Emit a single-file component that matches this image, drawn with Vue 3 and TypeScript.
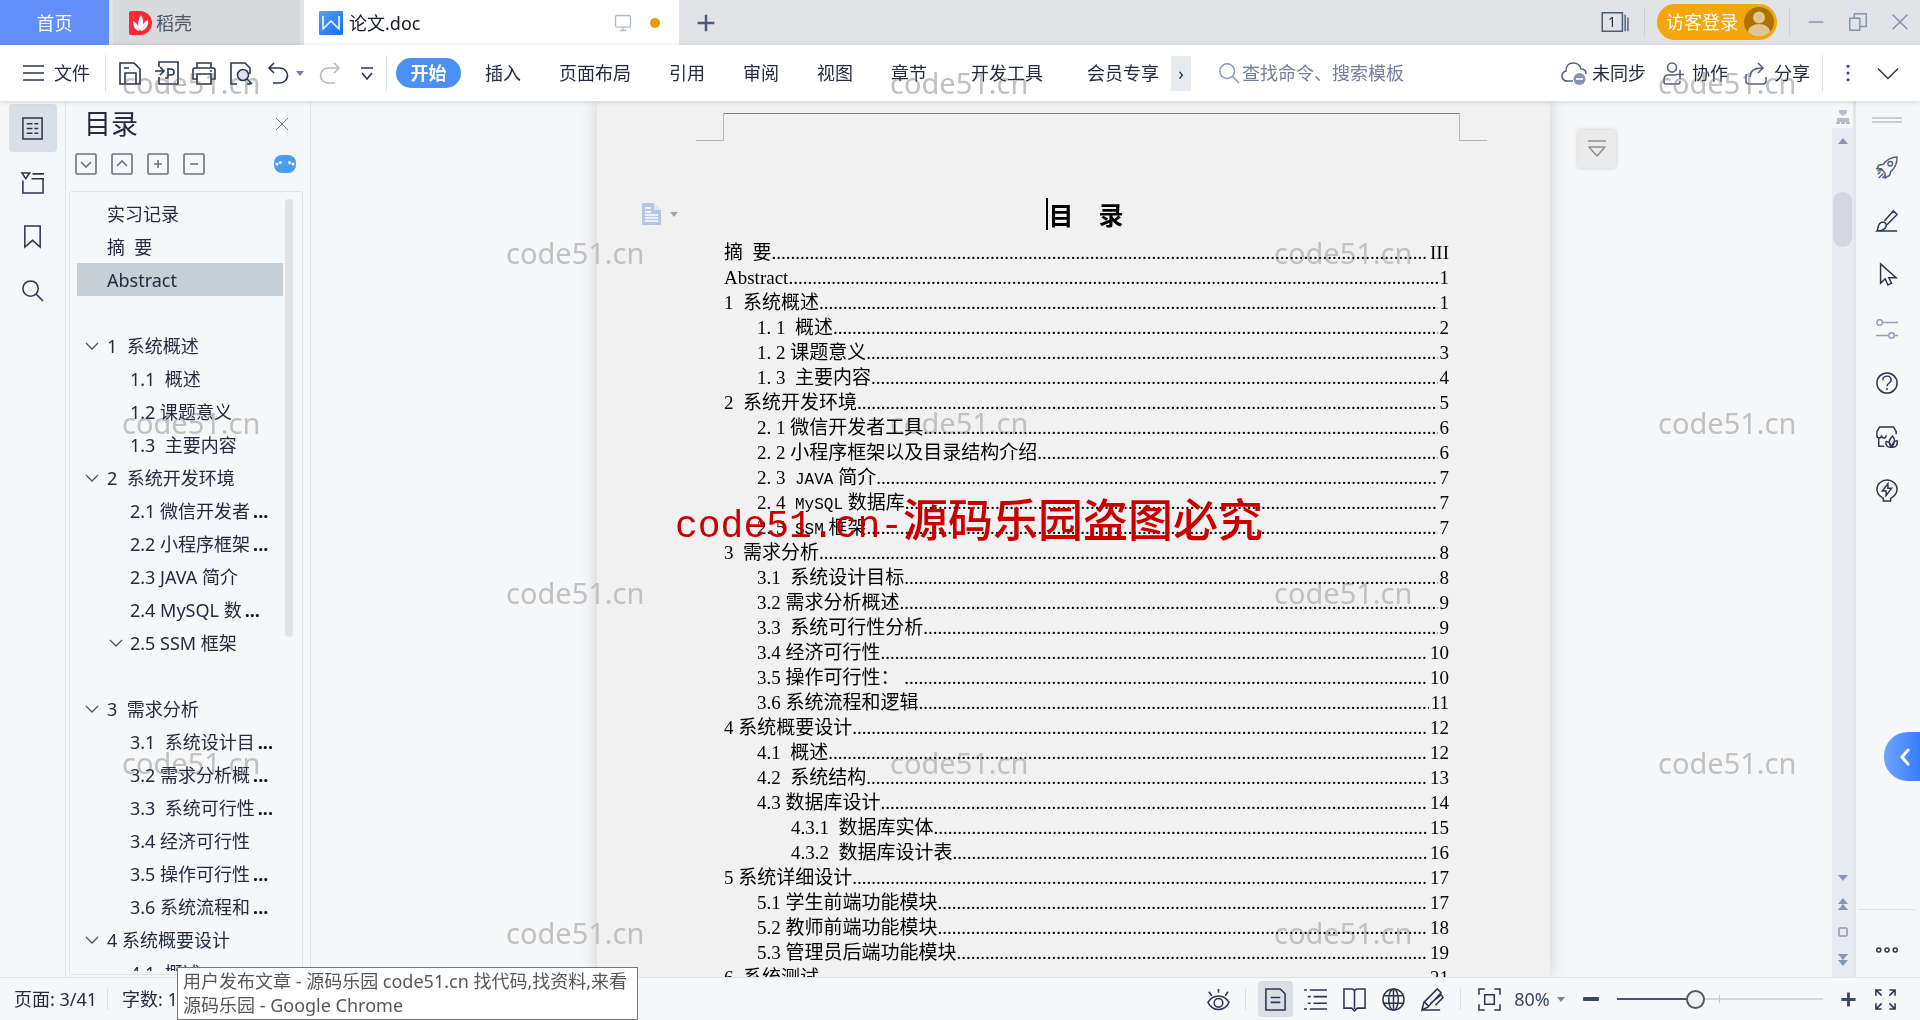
<script setup lang="ts">
import { ref } from 'vue'

const icons: Record<string, string> = {
  menu: '<path d="M1 5h21M1 12h21M1 19h21"/>',
  save: '<path d="M2 2h14l6 6v15H2zM7 23V12h11v11M6 7h5"/>',
  exportPdf: '<path d="M4 6V1h19v22H4v-7M0 10h9M5 6l4 4-4 4M13 7v10M10 17h3M13 8h3q3 0 3 3t-3 3h-3"/>',
  print: '<path d="M5 7V2h14v5M5 18H1V9q0-2 2-2h18q2 0 2 2v9h-4M5 13h14v10H5zM18 10h2"/>',
  preview: '<path d="M8 23H2V2h14l5 5v6M21 21v2h-3"/><circle cx="14" cy="14" r="5.5" fill="#dfe2e8"/><path d="M18 18l5 5"/>',
  undo: '<path d="M8 2L3 7l5 5M3 7h11a7.500 7.500 0 0 1 0 15H7"/>',
  redo: '<path d="M16 2l5 5-5 5M21 7H10a7.500 7.500 0 0 0 0 15h7"/>',
  more: '<path d="M6 7h12M7 12l5 6 5-6"/>',
  search: '<circle cx="10" cy="10" r="8"/><path d="M16 16l7 7"/>',
  cloud: '<path d="M11 20H6A5 5 0 0 1 4 10C4 5 7 2 11 2c4 0 7 2 8 6 3 0 5 2 5 5"/><circle cx="17.500" cy="18" r="6" fill="#8794b0" stroke="none"/><path d="M14 18h7" stroke="#fff"/>',
  person: '<circle cx="10" cy="6.500" r="4.500"/><path d="M14 14H6q-4 0-4 5v2q0 2 2 2h12q2 0 2-2v-1M18 9v9M14 13.500h8"/>',
  share: '<path d="M2 13v7q0 3 3 3h14q3 0 3-3v-4M6 16c0-6 4-9 12-9M14 2l5 5-5 5"/>',
  dots: '<g fill="#3b4763" stroke="none"><circle cx="12" cy="3" r="2"/><circle cx="12" cy="12" r="2"/><circle cx="12" cy="21" r="2"/></g>',
  down: '<path d="M1 7l11 11L23 7"/>',
  monitor: '<rect x="3" y="3" width="18" height="14" rx="2"/><path d="M12 17v4M8 21h8"/>',
  plus: '<path d="M12 2v20M2 12h20" stroke-width="3"/>',
  windows: '<path d="M1 2h22v20H1z"/><path d="M26 4v18M29 7v15" stroke-width="1.500"/>',
  minimize: '<path d="M4 12h16"/>',
  restore: '<path d="M3 8h11v13H3zM8 8V3h13v14h-7"/>',
  close: '<path d="M4 4l16 16M20 4L4 20"/>',
  toc: '<path d="M2 1h20v22H2zM6 7h6M14 7h4M6 12h6M14 12h4M6 17h6M14 17h4"/>',
  outline: '<path d="M1 2h8L5 8zM12 3h12M11 8h13M2 10v13h21V8"/>',
  bookmark: '<path d="M4 1h16v22l-8-7-8 7z"/>',
  boxDown: '<rect x="2" y="2" width="20" height="20" rx="1"/><path d="M7 10l5 5 5-5"/>',
  boxUp: '<rect x="2" y="2" width="20" height="20" rx="1"/><path d="M7 14l5-5 5 5"/>',
  boxPlus: '<rect x="2" y="2" width="20" height="20" rx="1"/><path d="M8 12h8M12 8v8"/>',
  boxMinus: '<rect x="2" y="2" width="20" height="20" rx="1"/><path d="M8 12h8"/>',
  rocket: '<path d="M23 1c-8 0-12 4-15 8l-5 1-2 4h5l4 5v5l5-3 1-4c5-4 7-8 7-16zM7 15c-3 0-5 1-5 2M2 20l3-3M3 24l5-5M7 24l3-3"/><circle cx="15.500" cy="8.500" r="2.500"/>',
  brush: '<path d="M9 12L19 1l4 4-11 11M1 23h22M1 23c2-2 0-9 6-10 3 0 5 2 4 5-1 3-5 5-10 5z"/>',
  cursor: '<path d="M5 0v21l5-5 3 7 4-2-3-6h8z"/>',
  sliders: '<circle cx="4" cy="5" r="3"/><path d="M7 5h17M0 19h14M20 19h4"/><circle cx="17" cy="19" r="3"/>',
  help: '<circle cx="12" cy="12" r="11"/><path d="M7.500 9c0-6 9-6 9 0 0 3-4.500 3-4.500 6.500M12 17.500v2"/>',
  shop: '<path d="M9 22H3V12M1 12V6l3-5h15l3 5v3M1 10c0 4 5 4 5 0M6 10c0 4 5 4 5 0M17 23c-4-4-3-8 1-12 3 3 3 8-1 12zM17 23c-5 1-7-3-6-6 3 0 5 2 6 6zM17 23c5 1 7-3 6-7-3 0-5 3-6 7z"/>',
  bulb: '<path d="M8 23v-3C3 17 1 14 1 10a11 10 0 0 1 22 0c0 4-2 7-7 10v3zM13 4l-6 8h4v5l6-8h-4z"/>',
  ellipsis: '<circle cx="3" cy="12" r="2.200"/><circle cx="12" cy="12" r="2.200"/><circle cx="21" cy="12" r="2.200"/>',
  eye: '<path d="M1 15c5-9 17-9 22 0-5 10-17 10-22 0zM12 1v4M2 4l3 4M22 4l-3 4"/><circle cx="12" cy="15.500" r="4.500"/>',
  page: '<path d="M2 1h15l5 5v17H2zM7 10h10M7 15h10"/>',
  list: '<path d="M0 2h3M6 2h18M4 9h3M10 9h14M4 16h3M10 16h14M0 22h3M6 22h18"/>',
  book: '<path d="M12 4v18M1 1h8q3 0 3 3 0-3 3-3h8v20h-8l-3 3-3-3H1z"/>',
  globe: '<circle cx="12" cy="12" r="11"/><ellipse cx="12" cy="12" rx="5" ry="11"/><path d="M1 8h22M1 16h22M12 1v22"/>',
  pen: '<path d="M3 15L17 1l4 4L7 20l-6 3zM4 15l4 4M10 16l11-9 2 3-8 8M1 23h19"/>',
  fit: '<path d="M1 7V1h6M17 1h6v6M23 17v6h-6M7 23H1v-6M7 7h10v10H7z"/>',
  expand: '<path d="M2 8V2h6M2 2l6 6M16 2h6v6M22 2l-6 6M22 16v6h-6M22 22l-6-6M8 22H2v-6M2 22l6-6"/>',
}

const fileTools = ['save', 'exportPdf', 'print', 'preview', 'undo']
const menus = ['插入', '页面布局', '引用', '审阅', '视图', '章节', '开发工具', '会员专享']
const railLeft = ['toc', 'outline', 'bookmark', 'search']
const railRight = ['rocket', 'brush', 'cursor', 'sliders', 'help', 'shop', 'bulb']
const viewModes = ['list', 'book', 'globe', 'pen']

interface Node { text: string; level?: number; open?: boolean; cut?: boolean }
const tree: Node[] = [
  { text: '实习记录' },
  { text: '摘  要' },
  { text: 'Abstract' },
  { text: '' },
  { text: '1  系统概述', open: true },
  { text: '1.1  概述', level: 2 },
  { text: '1.2 课题意义', level: 2 },
  { text: '1.3  主要内容', level: 2 },
  { text: '2  系统开发环境', open: true },
  { text: '2.1 微信开发者', level: 2, cut: true },
  { text: '2.2 小程序框架', level: 2, cut: true },
  { text: '2.3 JAVA 简介', level: 2 },
  { text: '2.4 MySQL 数', level: 2, cut: true },
  { text: '2.5 SSM 框架', level: 2, open: true },
  { text: '' },
  { text: '3  需求分析', open: true },
  { text: '3.1  系统设计目', level: 2, cut: true },
  { text: '3.2 需求分析概', level: 2, cut: true },
  { text: '3.3  系统可行性', level: 2, cut: true },
  { text: '3.4 经济可行性', level: 2 },
  { text: '3.5 操作可行性', level: 2, cut: true },
  { text: '3.6 系统流程和', level: 2, cut: true },
  { text: '4 系统概要设计', open: true },
  { text: '4.1  概述', level: 2 },
]
const selected = ref('Abstract')

// Entries with `wide` use half-em digits and dot; `latin` is a fixed-pitch word after the number.
interface Entry { wide?: [number, number]; latin?: string; text: string; page: string; level?: number }
const toc: Entry[] = [
  { text: '摘  要', page: 'III' },
  { text: 'Abstract', page: '1' },
  { text: '1  系统概述', page: '1' },
  { wide: [1, 1], text: '  概述', page: '2', level: 2 },
  { wide: [1, 2], text: ' 课题意义', page: '3', level: 2 },
  { wide: [1, 3], text: '  主要内容', page: '4', level: 2 },
  { text: '2  系统开发环境', page: '5' },
  { wide: [2, 1], text: ' 微信开发者工具', page: '6', level: 2 },
  { wide: [2, 2], text: ' 小程序框架以及目录结构介绍', page: '6', level: 2 },
  { wide: [2, 3], latin: 'JAVA', text: ' 简介', page: '7', level: 2 },
  { wide: [2, 4], latin: 'MySQL', text: ' 数据库', page: '7', level: 2 },
  { wide: [2, 5], latin: 'SSM', text: ' 框架', page: '7', level: 2 },
  { text: '3  需求分析', page: '8' },
  { text: '3.1  系统设计目标', page: '8', level: 2 },
  { text: '3.2 需求分析概述', page: '9', level: 2 },
  { text: '3.3  系统可行性分析', page: '9', level: 2 },
  { text: '3.4 经济可行性', page: '10', level: 2 },
  { text: '3.5 操作可行性： ', page: '10', level: 2 },
  { text: '3.6 系统流程和逻辑', page: '11', level: 2 },
  { text: '4 系统概要设计', page: '12' },
  { text: '4.1  概述', page: '12', level: 2 },
  { text: '4.2  系统结构', page: '13', level: 2 },
  { text: '4.3 数据库设计', page: '14', level: 2 },
  { text: '4.3.1  数据库实体', page: '15', level: 3 },
  { text: '4.3.2  数据库设计表', page: '16', level: 3 },
  { text: '5 系统详细设计', page: '17' },
  { text: '5.1 学生前端功能模块', page: '17', level: 2 },
  { text: '5.2 教师前端功能模块', page: '18', level: 2 },
  { text: '5.3 管理员后端功能模块', page: '19', level: 2 },
  { text: '6  系统测试', page: '21' },
]
const zoom = ref(37)
</script>

<template>
  <div class="app">
    <header class="tabs">
      <button class="tab home">首页</button>
      <button class="tab docer">
        <svg width="23" height="24" viewBox="0 0 23 24"><path d="M2 0h9a12 12 0 0 1 0 24H2q-2 0-2-2V2q0-2 2-2z" fill="#fb2a36"/><path d="M12 4c3 5 3 10-1 16-3-6-2-11 1-16zM4 10c4 2 6 5 6 10-4-1-6-5-6-10zM19 9c1 5-2 10-7 11 0-5 3-9 7-11z" fill="#fff"/></svg>
        <span>稻壳</span>
      </button>
      <button class="tab doc">
        <svg width="24" height="24" viewBox="0 0 24 24"><defs><linearGradient id="wg" x2="1" y2="1"><stop stop-color="#5a9cfb"/><stop offset="1" stop-color="#1270ee"/></linearGradient></defs><rect width="24" height="24" rx="1" fill="url(#wg)"/><path d="M4 5v13l8-8 8 8V5" fill="none" stroke="#fff" stroke-width="1.500"/></svg>
        <span>论文.doc</span>
        <svg class="ico monitor" viewBox="0 0 24 24" v-html="icons.monitor"></svg>
        <i class="dirty"></i>
      </button>
      <button class="add" aria-label="新建"><svg class="ico" viewBox="0 0 24 24" v-html="icons.plus"></svg></button>
      <div class="win">
        <button class="count" aria-label="窗口"><svg viewBox="0 0 32 24" class="ico" v-html="icons.windows"></svg><b>1</b></button>
        <i class="vline"></i>
        <button class="login">访客登录
          <svg width="30" height="30" viewBox="0 0 30 30"><circle cx="15" cy="15" r="15" fill="#ab7300"/><circle cx="15" cy="10.500" r="6" fill="#dfc590"/><path d="M4 25a11 8 0 0 1 22 0 15 15 0 0 1-22 0z" fill="#dfc590"/></svg>
        </button>
        <i class="vline"></i>
        <div class="wbtns">
          <button v-for="w in ['minimize', 'restore', 'close']" :key="w" :aria-label="w"><svg class="ico" viewBox="0 0 24 24" v-html="icons[w]"></svg></button>
        </div>
      </div>
    </header>

    <nav class="menubar">
      <button class="file"><svg class="ico" viewBox="0 0 24 24" v-html="icons.menu"></svg>文件</button>
      <i class="vline"></i>
      <div class="tools">
        <button v-for="t in fileTools" :key="t" :aria-label="t"><svg class="ico" viewBox="0 0 24 24" v-html="icons[t]"></svg></button>
        <i class="caret"></i>
        <button class="redo" aria-label="redo"><svg class="ico" viewBox="0 0 24 24" v-html="icons.redo"></svg></button>
        <button aria-label="more"><svg class="ico" viewBox="0 0 24 24" v-html="icons.more"></svg></button>
      </div>
      <i class="vline"></i>
      <button class="start">开始</button>
      <div class="menus">
        <button v-for="m in menus" :key="m">{{ m }}</button>
      </div>
      <button class="scroll" aria-label="更多选项卡">›</button>
      <label class="find">
        <svg class="ico" viewBox="0 0 24 24" v-html="icons.search"></svg>
        <input type="text" aria-label="查找" placeholder="查找命令、搜索模板">
      </label>
      <div class="share">
        <button><svg class="ico" viewBox="0 0 24 24" v-html="icons.cloud"></svg>未同步</button>
        <button><svg class="ico" viewBox="0 0 24 24" v-html="icons.person"></svg>协作</button>
        <button><svg class="ico" viewBox="0 0 24 24" v-html="icons.share"></svg>分享</button>
      </div>
      <i class="vline"></i>
      <button class="dots" aria-label="菜单"><svg class="ico" viewBox="0 0 24 24" v-html="icons.dots"></svg></button>
      <button class="fold" aria-label="收起"><svg class="ico" viewBox="0 0 24 24" v-html="icons.down"></svg></button>
    </nav>

    <div class="body">
      <aside class="rail">
        <button v-for="(r, i) in railLeft" :key="r" :class="{ on: i === 0 }" :aria-label="r"><svg class="ico" viewBox="0 0 24 24" v-html="icons[r]"></svg></button>
      </aside>

      <section class="panel">
        <div class="phead">
          <h2>目录</h2>
          <button aria-label="关闭"><svg class="ico" viewBox="0 0 24 24" v-html="icons.close"></svg></button>
        </div>
        <div class="ptools">
          <button v-for="b in ['boxDown', 'boxUp', 'boxPlus', 'boxMinus']" :key="b" :aria-label="b"><svg class="ico" viewBox="0 0 24 24" v-html="icons[b]"></svg></button>
          <svg class="bot" width="22" height="18" viewBox="0 0 22 18"><rect width="22" height="18" rx="8" fill="#4a9cf6"/><g fill="#fff"><circle cx="3" cy="9" r="1.500"/><circle cx="6.500" cy="7.500" r="1.500"/><circle cx="15.500" cy="7.500" r="1.500"/><circle cx="19" cy="9" r="1.500"/></g></svg>
        </div>
        <div class="treebox">
          <ul class="tree">
            <li v-for="(n, i) in tree" :key="i">
              <button v-if="n.text" :class="['node', { sub: n.level === 2, on: n.text === selected }]" @click="selected = n.text">
                <svg class="chev" width="14" height="14" viewBox="0 0 14 14"><path v-if="n.open" d="M1 4l6 6 6-6" fill="none" stroke="#4a5468" stroke-width="1.300"/></svg>
                <span>{{ n.text }}<b v-if="n.cut">...</b></span>
              </button>
            </li>
          </ul>
          <i class="bar"></i>
        </div>
      </section>

      <main class="canvas">
        <article class="sheet">
          <div class="marks"><i></i><i></i><i></i></div>
          <div class="title">
            <div class="para">
              <svg width="19" height="22" viewBox="0 0 19 22"><path d="M0 0h12l7 7v15H0z" fill="#b4c7e4"/><path d="M12 0v7h7" fill="#dce6f4"/><path d="M3 5h6M3 9h6M3 12h13M3 15h13M3 18h13" stroke="#fff" stroke-width="1.500"/></svg>
              <i class="caret"></i>
            </div>
            <h1>目　录</h1>
          </div>
          <div class="toc">
            <a v-for="(e, i) in toc" :key="i" href="#" :class="'l' + (e.level || 1)">
              <span><template v-if="e.wide">{{ e.wide[0] }}<span class="dot">.</span>{{ e.wide[1] }}</template><template v-if="e.latin">{{ '  ' }}<span class="mono">{{ e.latin }}</span></template>{{ e.text }}</span>
              <i class="leader"></i>
              <span class="num">{{ e.page }}</span>
            </a>
          </div>
        </article>
        <button class="float" aria-label="展开"><svg width="20" height="20" viewBox="0 0 20 20"><path d="M1 2h18M2 8h16l-8 9z" fill="none" stroke="#8e8e8e" stroke-width="1.500" stroke-linejoin="round"/></svg></button>
      </main>

      <div class="vscroll">
        <svg class="ruler" width="14" height="14" viewBox="0 0 14 14"><path d="M3 0h8v3L7 6 3 3zM1 8h12v4H1zM0 12h4v2H0zM5 12h4v2H5zM10 12h4v2h-4z" fill="#b4bccd"/></svg>
        <div class="track">
          <svg width="10" height="6" viewBox="0 0 10 6"><path d="M5 0l5 6H0z"/></svg>
          <i class="thumb"></i>
          <div class="steps">
            <svg width="10" height="6" viewBox="0 0 10 6"><path d="M0 0h10L5 6z"/></svg>
            <svg width="10" height="12" viewBox="0 0 10 12"><path d="M5 0l5 6H0zM5 6l5 6H0z"/></svg>
            <svg width="10" height="10" viewBox="0 0 10 10"><rect x="1" y="1" width="8" height="8" rx="1" fill="#e8eaf0" stroke="#8a97b3" stroke-width="1.500"/></svg>
            <svg width="10" height="12" viewBox="0 0 10 12"><path d="M0 0h10L5 6zM0 6h10l-5 6z"/></svg>
          </div>
        </div>
      </div>

      <aside class="side">
        <i class="grip"></i>
        <button v-for="r in railRight" :key="r" :class="r" :aria-label="r"><svg class="ico" viewBox="0 0 24 24" v-html="icons[r]"></svg></button>
        <div class="last"><button aria-label="更多"><svg class="ico" viewBox="0 0 24 24" v-html="icons.ellipsis"></svg></button></div>
        <button class="pull" aria-label="展开侧栏"><svg width="10" height="18" viewBox="0 0 10 18"><path d="M8 2L2 9l6 7" fill="none" stroke="#fff" stroke-width="3" stroke-linecap="round"/></svg></button>
      </aside>
    </div>

    <footer class="status">
      <span class="pages">页面: 3/41</span>
      <i class="vline"></i>
      <span class="words">字数: 1</span>
      <div class="right">
        <button class="eye" aria-label="护眼"><svg class="ico" viewBox="0 0 24 24" v-html="icons.eye"></svg></button>
        <i class="vline"></i>
        <button class="on" aria-label="页面视图"><svg class="ico" viewBox="0 0 24 24" v-html="icons.page"></svg></button>
        <button v-for="v in viewModes" :key="v" class="mode" :aria-label="v"><svg class="ico" viewBox="0 0 24 24" v-html="icons[v]"></svg></button>
        <i class="vline"></i>
        <button class="fit" aria-label="适合"><svg class="ico" viewBox="0 0 24 24" v-html="icons.fit"></svg></button>
        <button class="pct">80% <i class="caret"></i></button>
        <button class="zb" aria-label="缩小"><i class="minus"></i></button>
        <input v-model="zoom" class="zoom" type="range" min="0" max="100" aria-label="缩放">
        <button class="zb" aria-label="放大"><svg class="ico" viewBox="0 0 24 24"><path d="M12 2v20M2 12h20" stroke-width="4"/></svg></button>
        <button class="full" aria-label="全屏"><svg class="ico" viewBox="0 0 24 24" v-html="icons.expand"></svg></button>
      </div>
    </footer>

    <div class="tip">用户发布文章 - 源码乐园 code51.cn 找代码,找资料,来看<br>源码乐园 - Google Chrome</div>

    <div class="marksheet" aria-hidden="true">
      <div v-for="r in 6" :key="r" class="mrow"><span v-for="c in (r % 2 ? 3 : 2)" :key="c">code51.cn</span></div>
    </div>
    <div class="notice"><span>code51.cn-</span>源码乐园盗图必究</div>
  </div>
</template>

<style>
body { margin: 0; overflow: hidden; }
</style>

<style scoped>
* { box-sizing: border-box; }
.app { position: relative; display: flex; flex-direction: column; height: 100vh; overflow: hidden; background: #f6f7f9; color: #232b3d; font: 18px/24px "Noto Sans", "Noto Sans CJK SC", sans-serif; }
button { padding: 0; border: 0; background: none; color: inherit; font: inherit; display: flex; align-items: center; justify-content: center; flex: none; white-space: nowrap; }
.ico { width: 24px; height: 24px; fill: none; stroke: #2c3650; stroke-width: 1.6; flex: none; overflow: visible; }
.vline { width: 1px; height: 36px; background: #dcdfe5; flex: none; }
.caret { border: 4px solid transparent; border-top: 5px solid #74859b; border-bottom: 0; flex: none; }

.tabs { display: flex; height: 45px; flex: none; background: #e2e3e7; }
.tab { justify-content: flex-start; }
.home { width: 109px; justify-content: center; background: #628ffb; color: #fff; margin-right: 4px; }
.docer { width: 187px; padding-left: 16px; gap: 4px; background: #d9dade; color: #4c566b; margin-right: 4px; }
.doc { width: 375px; padding: 0 19px 0 15px; gap: 6px; background: #fff; color: #12161f; }
.monitor { width: 20px; height: 20px; margin-left: auto; stroke: #aeb8cf; }
.dirty { width: 10px; height: 10px; margin-left: 11px; border-radius: 50%; background: #e69a05; }
.add { width: 54px; }
.add .ico { width: 20px; height: 20px; stroke: #4d5a78; }
.win { display: flex; align-items: center; margin-left: auto; height: 44px; padding-right: 8px; }
.win .vline { height: 30px; background: #cdd0d6; }
.count { position: relative; width: 32px; margin-right: 12px; }
.count .ico { width: 32px; height: 22px; stroke: #4d5a78; }
.count b { position: absolute; left: 0; width: 24px; text-align: center; font-size: 14px; font-weight: 400; }
.login { height: 36px; margin: 0 12px; padding: 0 3px 0 9px; gap: 6px; border-radius: 18px; background: #f4a60c; color: #fff; }
.wbtns { display: flex; gap: 18px; margin-left: 14px; }
.wbtns button { width: 24px; }
.wbtns .ico { width: 22px; height: 22px; stroke: #8491ad; }

.menubar { position: relative; z-index: 1; display: flex; align-items: center; height: 56px; flex: none; background: #fff; box-shadow: 0 1px 5px rgba(0, 0, 0, .14); }
.file { width: 105px; padding-left: 22px; gap: 8px; justify-content: flex-start; }
.tools { display: flex; align-items: center; width: 280px; padding-left: 5px; }
.tools button { width: 37px; }
.tools .caret { margin-right: 7px; }
.tools .redo .ico { stroke: #b5b8be; }
.start { width: 65px; height: 30px; margin-left: 9px; border-radius: 15px; background: #4a90f5; color: #fff; font-weight: 700; }
.menus { display: flex; gap: 38px; margin-left: 24px; }
.menus button:nth-child(n+7) { margin-left: 6px; }
.scroll { width: 20px; height: 35px; margin-left: 12px; background: #e7eaef; }
.find { display: flex; align-items: center; flex: 1; margin-left: 27px; }
.find .ico { width: 22px; height: 22px; stroke: #8a97b8; }
.find input { flex: 1; min-width: 0; padding: 0; margin-left: 2px; border: 0; outline: 0; background: none; font: inherit; }
.find input::placeholder { color: #727e9b; opacity: 1; }
.share { display: flex; gap: 16px; margin-right: 12px; }
.share button { gap: 6px; }
.share .ico { stroke: #55617f; }
.dots { width: 50px; }
.dots .ico { width: 18px; height: 18px; }
.fold { width: 47px; padding-right: 18px; }
.fold .ico { width: 22px; height: 22px; }

.body { display: flex; flex: 1; min-height: 0; }
.rail { display: flex; flex-direction: column; align-items: center; width: 66px; padding-top: 3px; gap: 6px; flex: none; border-right: 1px solid #e0e3e8; }
.rail button { width: 48px; height: 48px; border-radius: 4px; }
.rail button.on { background: #d9dfe6; }
.rail .ico { width: 23px; height: 23px; }
.panel { display: flex; flex-direction: column; width: 245px; flex: none; padding-left: 3px; border-right: 1px solid #e0e3e8; }
.phead { display: flex; align-items: center; justify-content: space-between; height: 46px; padding: 0 19px 0 15px; }
.phead h2 { margin: 0; font-size: 27px; line-height: 36px; font-weight: 400; }
.phead .ico { width: 18px; height: 18px; stroke-width: 1.3; stroke: #6a7488; }
.ptools { display: flex; align-items: center; height: 33px; padding: 0 14px 0 5px; gap: 12px; }
.ptools .ico { stroke: #6b717d; }
.ptools .bot { margin-left: auto; }
.treebox { display: flex; flex: 1; min-height: 0; margin: 11px 7px 2px 0; border: 1px solid #e0e3e8; border-radius: 3px; }
.tree { list-style: none; margin: 5px 2px 3px 7px; padding: 0; flex: 1; overflow: hidden; }
.tree li { height: 33px; }
.node { width: 100%; height: 33px; padding-left: 8px; gap: 8px; justify-content: flex-start; white-space: pre; }
.node.sub { padding-left: 32px; }
.node.sub .chev { margin-right: -1px; }
.node.on { background: #c6ced6; }
.node b { margin-left: 3px; color: #12161f; }
.bar { width: 8px; height: 438px; margin: 7px 9px 0 0; border-radius: 4px; background: #dfe3e7; }

.canvas { position: relative; display: flex; justify-content: center; flex: 1; min-width: 0; padding-left: 4px; overflow: hidden; }
.sheet { width: 953px; flex: none; background: #f1f1f1; box-shadow: 0 0 16px rgba(40, 45, 60, .2); }
.marks { display: grid; grid-template-columns: 28px 1fr 28px; height: 28px; margin: 12px 63px 0 99px; }
.marks i { border: 0 solid #b8b8b8; }
.marks i:nth-child(1) { border-width: 0 1px 1px 0; }
.marks i:nth-child(2) { border-top: 1px solid #7f7f7f; }
.marks i:nth-child(3) { border-width: 0 0 1px 1px; }
.title { display: grid; grid-template-columns: 127px 1fr 104px; align-items: center; height: 34px; margin: 56px 0 9px; }
.para { display: flex; align-items: center; gap: 9px; padding-left: 45px; }
.para .caret { border-top-color: #a6a6a6; }
.title h1 { justify-self: center; margin: 0; border-left: 2px solid #000; font: 700 25px/32px "Noto Sans CJK SC", sans-serif; color: #000; }
.toc { padding: 0 101px 0 127px; font: 19px/25px "Liberation Serif", "Noto Sans CJK SC", serif; }
.toc a { display: flex; height: 25px; color: #000; text-decoration: none; white-space: pre; }
.toc .l2 { padding-left: 33px; }
.toc .l3 { padding-left: 67px; }
.leader { flex: 1; min-width: 0; overflow: hidden; font-style: normal; }
.leader::before { content: "......................................................................................................................................................"; }
.num { padding-left: 2px; }
.dot { display: inline-block; width: .5em; }
.mono { font-family: "Liberation Mono", monospace; font-size: 16px; }
.float { position: absolute; top: 29px; right: 216px; width: 38px; height: 38px; border-radius: 3px; background: #ebebeb; box-shadow: 0 0 4px rgba(0, 0, 0, .18); }

.vscroll { display: flex; flex-direction: column; align-items: center; width: 24px; flex: none; border-right: 3px solid #e3e5ea; }
.ruler { margin: 9px 0 4px; flex: none; }
.track { display: flex; flex-direction: column; align-items: center; flex: 1; width: 21px; padding: 10px 0 11px; background: #e8eaf0; }
.track svg { fill: #8a97b3; flex: none; }
.thumb { width: 19px; height: 55px; margin-top: 48px; border-radius: 10px; background: #d4d7df; }
.steps { display: flex; flex-direction: column; align-items: center; gap: 17px; margin-top: auto; }

.side { position: relative; display: flex; flex-direction: column; align-items: center; width: 64px; padding-right: 2px; flex: none; }
.grip { width: 30px; height: 6px; margin: 16px 0 17px; border: solid #cacccf; border-width: 2px 0; }
.side > button { width: 40px; height: 54px; }
.side .ico { width: 22px; height: 22px; }
.side .rocket .ico { stroke: #55617f; }
.side .sliders .ico { stroke: #94a0b7; }
.last { display: flex; justify-content: center; width: 58px; height: 68px; margin-top: auto; border-top: 1px solid #e0e3e8; }
.last .ico { margin-top: 12px; }
.side .pull { position: absolute; right: 0; bottom: 196px; width: 36px; height: 49px; padding-left: 6px; border-radius: 24px 0 0 24px; background: linear-gradient(90deg, #6ea4ff, #377dff); }
.last button { height: 68px; }

.status { display: flex; align-items: center; height: 43px; flex: none; border-top: 1px solid #e0e3e8; }
.pages { padding: 0 10px 0 14px; }
.words { padding-left: 14px; }
.status .vline { height: 22px; }
.right { display: flex; align-items: center; margin-left: auto; padding-right: 23px; }
.eye { margin-right: 15px; }
.right .on { width: 35px; height: 36px; margin: 0 3px 0 12px; border-radius: 4px; background: #dadfe6; }
.right .ico { width: 23px; height: 23px; }
.mode { width: 39px; }
.right .mode:nth-child(7) { margin-right: 8px; }
.fit { margin: 0 12px 0 17px; }
.pct { gap: 7px; width: 53px; color: #3b4763; }
.zb { width: 18px; margin-left: 16px; }
.right .zb .ico { width: 17px; height: 17px; stroke: #3b4763; }
.minus { width: 16px; height: 4px; border-radius: 1px; background: #3b4763; }
.zoom { appearance: none; width: 206px; height: 20px; margin: 0 0 0 17px; background: linear-gradient(90deg, transparent 102px, #c3c8d1 102px 103px, transparent 103px) center / 100% 8px no-repeat, linear-gradient(90deg, #46536e 38%, #d3d7de 38%) center / 100% 2px no-repeat; }
.zoom::-webkit-slider-thumb { appearance: none; width: 19px; height: 19px; border: 2px solid #55585e; border-radius: 50%; background: #f1f1f1; }
.full { margin-left: 17px; }

.tip { position: absolute; left: 177px; bottom: 0; width: 461px; height: 53px; padding: 1px 5px; border: 1px solid #767676; background: #fff; color: #575757; white-space: nowrap; }
.marksheet { position: absolute; z-index: 2; inset: -2px 0 0; overflow: hidden; pointer-events: none; mix-blend-mode: darken; }
.mrow { display: flex; align-items: center; height: 170px; padding-left: 122px; color: #c1c1c1; font-size: 29px; }
.mrow:nth-child(even) { padding-left: 506px; }
.mrow span { width: 768px; flex: none; }
.notice { position: absolute; z-index: 3; left: 675px; top: 488px; font: 500 45px/60px "Noto Sans CJK SC", sans-serif; color: #c80000; white-space: nowrap; pointer-events: none; }
.notice span { font-family: "Liberation Mono", monospace; font-size: 38px; font-weight: 400; }
</style>
